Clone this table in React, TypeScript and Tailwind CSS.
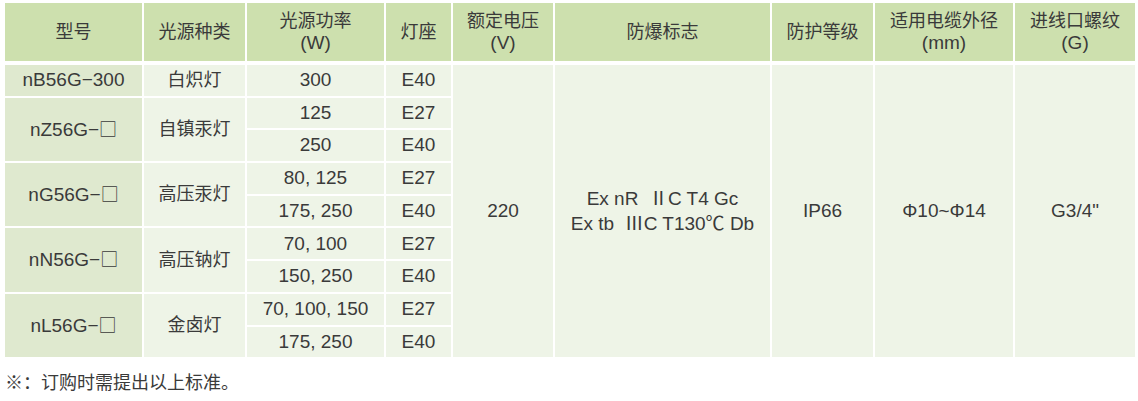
import React from "react";

type Group = { model: string; box: boolean; type: string; rows: [string, string][] };

const groups: Group[] = [
  { model: "nB56G−300", box: false, type: "白炽灯", rows: [["300", "E40"]] },
  { model: "nZ56G−", box: true, type: "自镇汞灯", rows: [["125", "E27"], ["250", "E40"]] },
  { model: "nG56G−", box: true, type: "高压汞灯", rows: [["80, 125", "E27"], ["175, 250", "E40"]] },
  { model: "nN56G−", box: true, type: "高压钠灯", rows: [["70, 100", "E27"], ["150, 250", "E40"]] },
  { model: "nL56G−", box: true, type: "金卤灯", rows: [["70, 100, 150", "E27"], ["175, 250", "E40"]] },
];

function H({ a, b, w }: { a: string; b?: string; w: string }) {
  return (
    <div className={`${w} h-[58px] bg-[#cde0ae] flex flex-col items-center justify-center text-[18px] leading-[22px] text-[#3a3a3a]`}>
      <span>{a}</span>
      {b && <span className="text-[19px]">{b}</span>}
    </div>
  );
}

function Tall({ w, children }: { w: string; children: React.ReactNode }) {
  return (
    <div className={`${w} bg-[#eef4e7] flex flex-col items-center justify-center text-[19px] text-[#3a3a3a]`}>
      {children}
    </div>
  );
}

export default function App() {
  return (
    <div className="bg-white w-[1138px] h-[401px] pt-[3px] pl-[5px] font-['Liberation_Sans','Noto_Sans_CJK_SC',sans-serif]">
      <div className="flex gap-[2px]">
        <H w="w-[137px]" a="型号" />
        <H w="w-[101px]" a="光源种类" />
        <H w="w-[137px]" a="光源功率" b="(W)" />
        <H w="w-[65px]" a="灯座" />
        <H w="w-[100px]" a="额定电压" b="(V)" />
        <H w="w-[215px]" a="防爆标志" />
        <H w="w-[101px]" a="防护等级" />
        <H w="w-[138px]" a="适用电缆外径" b="(mm)" />
        <H w="w-[120px]" a="进线口螺纹" b="(G)" />
      </div>
      <div className="flex gap-[2px] mt-[4px]">
        <div className="flex flex-col gap-[2px]">
          {groups.map((g) => (
            <div key={g.model + g.type} className="flex gap-[2px]">
              <div className="w-[137px] bg-[#dfe9cf] flex items-center justify-center text-[19px] text-[#3a3a3a]">
                <span>
                  {g.model}
                  {g.box && <span className="text-[18px] font-['Noto_Sans_CJK_SC',sans-serif]">□</span>}
                </span>
              </div>
              <div className="w-[101px] bg-[#eef4e7] flex items-center justify-center text-[18px] text-[#3a3a3a]">
                {g.type}
              </div>
              <div className="flex flex-col gap-[2px]">
                {g.rows.map((row) => (
                  <div key={row[0]} className="flex gap-[2px] h-[30.7px]">
                    <div className="w-[137px] bg-[#eef4e7] flex items-center justify-center text-[19px] text-[#3a3a3a]">
                      {row[0]}
                    </div>
                    <div className="w-[65px] bg-[#eef4e7] flex items-center justify-center text-[19px] text-[#3a3a3a]">
                      {row[1]}
                    </div>
                  </div>
                ))}
              </div>
            </div>
          ))}
        </div>
        <Tall w="w-[100px]">220</Tall>
        <Tall w="w-[215px]">
          <div className="flex flex-col items-center leading-[25px]">
            <span>Ex nR&nbsp;&nbsp;ⅡC T4 Gc</span>
            <span>Ex tb&nbsp;&nbsp;ⅢC T130℃ Db</span>
          </div>
        </Tall>
        <Tall w="w-[101px]">IP66</Tall>
        <Tall w="w-[138px]">Φ10~Φ14</Tall>
        <Tall w="w-[120px]">G3/4"</Tall>
      </div>
      <div className="mt-[14px] text-[18px] leading-[24px] text-[#3a3a3a]">※：订购时需提出以上标准。</div>
    </div>
  );
}
